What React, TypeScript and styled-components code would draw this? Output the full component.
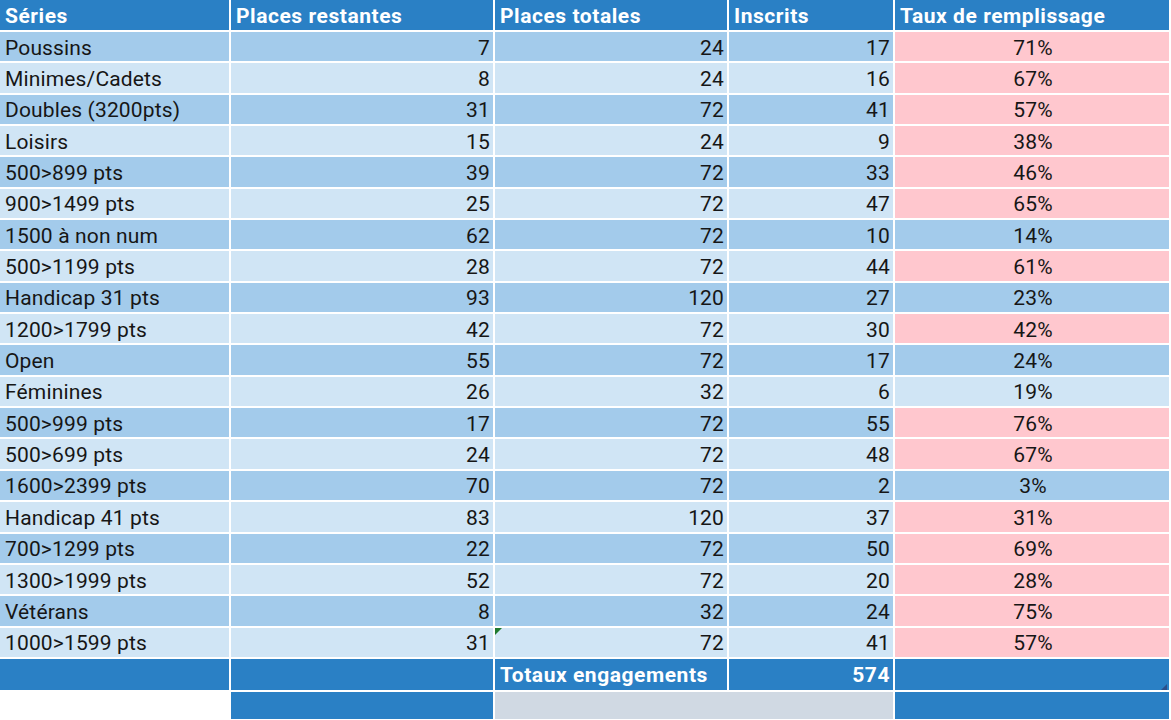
import styled, { createGlobalStyle } from 'styled-components';

type Tone = 'header' | 'dark' | 'light' | 'pink' | 'gray' | 'white';
type Align = 'left' | 'right' | 'center';

const TONES: Record<Tone, string> = {
  header: '#2a80c5',
  dark: '#a3cbeb',
  light: '#d0e5f5',
  pink: '#ffc7ce',
  gray: '#d0d9e3',
  white: '#ffffff',
};

const GlobalStyle = createGlobalStyle`
  html, body {
    margin: 0;
    padding: 0;
    background: #ffffff;
  }
  body {
    font-family: Roboto, "Noto Sans", sans-serif;
  }
`;

const StyledSheet = styled.div`
  background: #ffffff;
  display: grid;
  gap: 2px;
  grid-template-columns: 229px 262px 232px 164px 274px;
  grid-template-rows: 30px repeat(20, 29.35px) 31px 27px;
  height: 720px;
  overflow: hidden;
  width: 1171px;
`;

const StyledCell = styled.div<{ $tone: Tone; $align?: Align; $bold?: boolean; $span?: number }>`
  align-items: center;
  background-color: ${(props) => TONES[props.$tone]};
  color: ${(props) => (props.$tone === 'header' ? '#ffffff' : '#161616')};
  display: flex;
  font-size: 21px;
  font-weight: ${(props) => (props.$bold ? 700 : 400)};
  grid-column: span ${(props) => props.$span ?? 1};
  justify-content: ${(props) =>
    props.$align === 'right' ? 'flex-end' : props.$align === 'center' ? 'center' : 'flex-start'};
  letter-spacing: ${(props) => (props.$bold ? '0.55px' : '0.15px')};
  padding: 2px 3px 0 5px;
  position: relative;
  white-space: nowrap;
`;

const StyledErrorFlag = styled.span`
  border-right: 7px solid transparent;
  border-top: 7px solid #1f7a2e;
  height: 0;
  left: 0;
  position: absolute;
  top: 0;
  width: 0;
`;

const StyledResizeHandle = styled.span`
  border-bottom: 6px solid #2d4f8a;
  border-left: 6px solid transparent;
  bottom: 0;
  height: 0;
  position: absolute;
  right: 2px;
  width: 0;
`;

const ROWS: [string, number, number, number][] = [
  ['Poussins', 7, 24, 17],
  ['Minimes/Cadets', 8, 24, 16],
  ['Doubles (3200pts)', 31, 72, 41],
  ['Loisirs', 15, 24, 9],
  ['500>899 pts', 39, 72, 33],
  ['900>1499 pts', 25, 72, 47],
  ['1500 à non num', 62, 72, 10],
  ['500>1199 pts', 28, 72, 44],
  ['Handicap 31 pts', 93, 120, 27],
  ['1200>1799 pts', 42, 72, 30],
  ['Open', 55, 72, 17],
  ['Féminines', 26, 32, 6],
  ['500>999 pts', 17, 72, 55],
  ['500>699 pts', 24, 72, 48],
  ['1600>2399 pts', 70, 72, 2],
  ['Handicap 41 pts', 83, 120, 37],
  ['700>1299 pts', 22, 72, 50],
  ['1300>1999 pts', 52, 72, 20],
  ['Vétérans', 8, 32, 24],
  ['1000>1599 pts', 31, 72, 41],
];

const HEADERS = ['Séries', 'Places restantes', 'Places totales', 'Inscrits', 'Taux de remplissage'];

const App = () => {
  const total = ROWS.reduce((sum, row) => sum + row[3], 0);

  return (
    <>
      <GlobalStyle />
      <StyledSheet>
        {HEADERS.map((label) => (
          <StyledCell key={label} $tone="header" $bold>
            {label}
          </StyledCell>
        ))}

        {ROWS.map(([name, left, places, registered], index) => {
          const tone: Tone = index % 2 === 0 ? 'dark' : 'light';
          const rate = Math.round((registered / places) * 100);
          const isLast = index === ROWS.length - 1;
          return [
            <StyledCell key={`${name}-name`} $tone={tone}>
              {name}
            </StyledCell>,
            <StyledCell key={`${name}-left`} $tone={tone} $align="right">
              {left}
            </StyledCell>,
            <StyledCell key={`${name}-places`} $tone={tone} $align="right">
              {isLast && <StyledErrorFlag />}
              {places}
            </StyledCell>,
            <StyledCell key={`${name}-reg`} $tone={tone} $align="right">
              {registered}
            </StyledCell>,
            <StyledCell key={`${name}-rate`} $tone={rate >= 25 ? 'pink' : tone} $align="center">
              {rate}%
            </StyledCell>,
          ];
        })}

        <StyledCell $tone="header" />
        <StyledCell $tone="header" />
        <StyledCell $tone="header" $bold>
          Totaux engagements
        </StyledCell>
        <StyledCell $tone="header" $bold $align="right">
          {total}
        </StyledCell>
        <StyledCell $tone="header">
          <StyledResizeHandle />
        </StyledCell>

        <StyledCell $tone="white" />
        <StyledCell $tone="header" />
        <StyledCell $tone="gray" $span={2} />
        <StyledCell $tone="header" />
      </StyledSheet>
    </>
  );
};

export default App;
